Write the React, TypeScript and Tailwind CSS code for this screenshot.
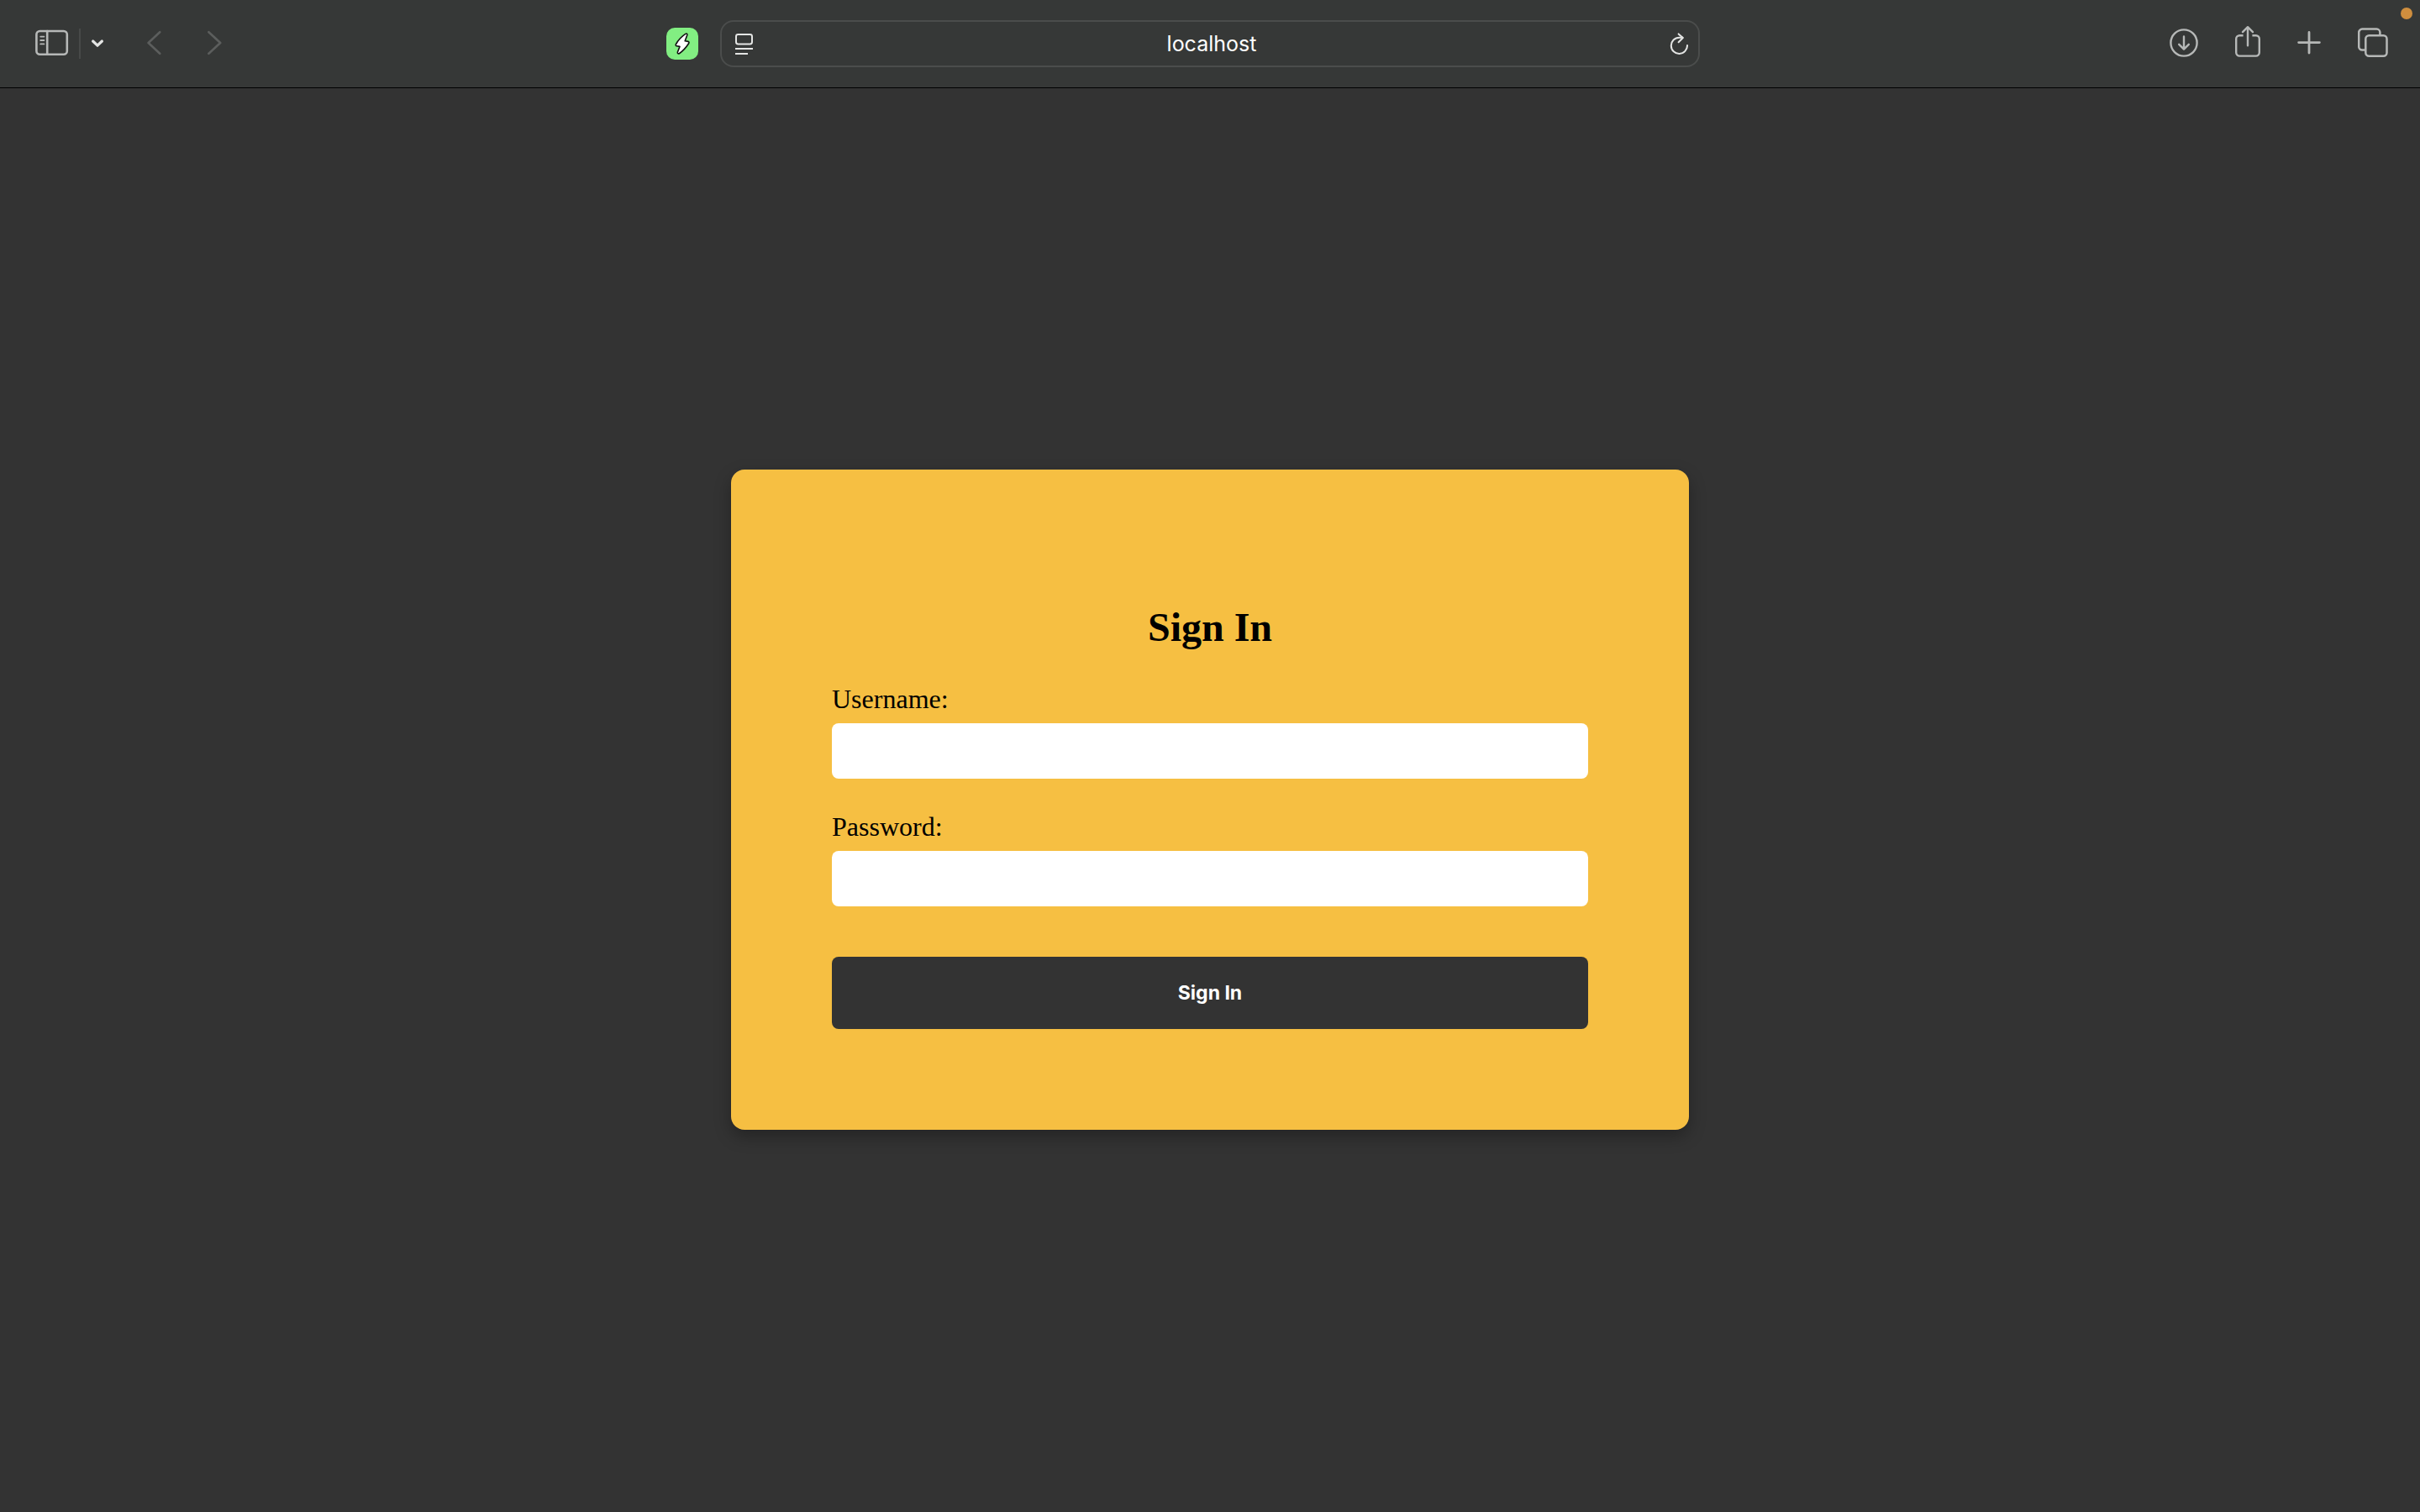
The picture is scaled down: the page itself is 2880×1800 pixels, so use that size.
import type { ReactNode } from "react";

function ToolButton({ label, className, children }: { label: string; className?: string; children: ReactNode }) {
  return (
    <button type="button" aria-label={label} className={`shrink-0 ${className ?? ""}`}>
      {children}
    </button>
  );
}

const strokeProps = {
  fill: "none",
  stroke: "currentColor",
  strokeLinecap: "round",
  strokeLinejoin: "round",
} as const;

function SidebarIcon() {
  return (
    <svg width="40" height="44" viewBox="0 0 40 44" {...strokeProps} strokeWidth="2.6">
      <rect x="1.4" y="7" width="36.4" height="27.8" rx="4" />
      <path d="M14.2 7v27.8" />
      <path d="M6.2 13.6h4.2M6.2 18h4.2M6.2 22.4h4.2" strokeWidth="1.8" />
    </svg>
  );
}

function MenuChevronIcon() {
  return (
    <svg width="16" height="44" viewBox="0 0 16 44" {...strokeProps} strokeWidth="3.2">
      <path d="M2.6 19l5.4 5.2 5.4-5.2" />
    </svg>
  );
}

function BackIcon() {
  return (
    <svg width="18" height="44" viewBox="0 0 18 44" {...strokeProps} strokeWidth="2.6">
      <path d="M16.2 8.2L2.6 21l13.6 12.8" />
    </svg>
  );
}

function ForwardIcon() {
  return (
    <svg width="18" height="44" viewBox="0 0 18 44" {...strokeProps} strokeWidth="2.6">
      <path d="M2.4 8.2L16.2 21 2.4 33.8" />
    </svg>
  );
}

function BoltIcon() {
  return (
    <svg width="38" height="38" viewBox="0 0 38 38">
      <path
        d="M22.8 7.4c1.3-.8 2.4-.1 2 1.4L22.2 15.8l3.6.6c1.2.3 1.5 1.2.8 2.3-3 4.6-6.4 8.6-11 11.8-1.5.9-2.7.1-2.2-1.5l2.6-6.6-3.7-.6c-1.1-.2-1.4-1.2-.8-2.3 2.6-4.7 6.4-8.9 11.3-12.1z"
        fill="#fff"
        stroke="#111"
        strokeWidth="1.6"
        strokeLinejoin="round"
      />
    </svg>
  );
}

function PageMenuIcon() {
  return (
    <svg width="22" height="44" viewBox="0 0 22 44" {...strokeProps} strokeWidth="2" strokeLinecap="butt">
      <rect x="1" y="11" width="19" height="11.5" rx="2.4" />
      <path d="M0 28h21M0 34h15" />
    </svg>
  );
}

function ReloadIcon() {
  return (
    <svg width="22" height="44" viewBox="0 0 22 44" {...strokeProps} strokeWidth="2">
      <path d="M21 24a9.6 9.6 0 1 1-9.6-9.3h4" />
      <path d="M10.6 10.4l5.2 4.6-5.2 5.2" />
    </svg>
  );
}

function DownloadIcon() {
  return (
    <svg width="34" height="44" viewBox="0 0 34 44" {...strokeProps} strokeWidth="2.4">
      <circle cx="17" cy="21" r="15.6" />
      <path d="M17 13.4v15M11.2 22.8L17 28.6l5.8-5.8" />
    </svg>
  );
}

function ShareIcon() {
  return (
    <svg width="30" height="44" viewBox="0 0 30 44" {...strokeProps} strokeWidth="2.4">
      <path
        d="M9.6 12.2H5.2a4 4 0 0 0-4 4v16.4a4 4 0 0 0 4 4h19.6a4 4 0 0 0 4-4V16.2a4 4 0 0 0-4-4h-4.4"
        strokeLinecap="butt"
      />
      <path d="M15 24.2V2.6M9 8.2l6-6 6 6" />
    </svg>
  );
}

function PlusIcon() {
  return (
    <svg width="28" height="44" viewBox="0 0 28 44" {...strokeProps} strokeWidth="2.8">
      <path d="M14 8.4v24.6M1.6 20.6h24.8" />
    </svg>
  );
}

function TabsIcon() {
  return (
    <svg width="36" height="44" viewBox="0 0 36 44" {...strokeProps} strokeWidth="2.5">
      <rect x="9.3" y="12.3" width="25.2" height="24.4" rx="4" />
      <path d="M9 29.5H5.2a4 4 0 0 1-4-4V8.6a4 4 0 0 1 4-4h17.2a4 4 0 0 1 4 4V12" strokeLinecap="butt" />
    </svg>
  );
}

function BrowserBar() {
  return (
    <header className="relative grid h-[105px] shrink-0 grid-cols-[1fr_40.5%_1fr] items-center border-b border-black bg-[#363837] text-[#b6b8b7]">
      <div className="flex items-center pl-[42px] pr-[26px]">
        <ToolButton label="Show sidebar">
          <SidebarIcon />
        </ToolButton>
        <span className="ml-3 h-9 w-0.5 bg-[#484a49]" />
        <ToolButton label="Tab groups" className="ml-3 text-[#e4e5e4]">
          <MenuChevronIcon />
        </ToolButton>
        <ToolButton label="Back" className="ml-[50px] text-[#5c5e5d]">
          <BackIcon />
        </ToolButton>
        <ToolButton label="Forward" className="ml-[54px] text-[#5c5e5d]">
          <ForwardIcon />
        </ToolButton>
        <ToolButton label="Extension" className="ml-auto rounded-[10px] bg-[#82ee82]">
          <BoltIcon />
        </ToolButton>
      </div>

      <div className="flex h-14 items-center rounded-2xl border-2 border-[#4b4d4c] pl-4 pr-3 text-[#e4e5e4]">
        <ToolButton label="Page menu">
          <PageMenuIcon />
        </ToolButton>
        <input
          aria-label="Address"
          defaultValue="localhost"
          className="min-w-0 flex-1 bg-transparent text-center font-['Inter',sans-serif] text-[25px] leading-8 text-white outline-none"
        />
        <ToolButton label="Reload">
          <ReloadIcon />
        </ToolButton>
      </div>

      <div className="flex items-center justify-end pr-[38px]">
        <ToolButton label="Downloads">
          <DownloadIcon />
        </ToolButton>
        <ToolButton label="Share" className="ml-11">
          <ShareIcon />
        </ToolButton>
        <ToolButton label="New tab" className="ml-11">
          <PlusIcon />
        </ToolButton>
        <ToolButton label="Tab overview" className="ml-11">
          <TabsIcon />
        </ToolButton>
      </div>

      <span className="absolute right-[9px] top-[9px] size-3.5 rounded-full bg-[#cf8e3e]" />
    </header>
  );
}

function Field({ id, label, type }: { id: string; label: string; type: string }) {
  return (
    <div className="mb-10">
      <label htmlFor={id} className="mb-3 block text-[32px] leading-[34px]">
        {label}
      </label>
      <input id={id} type={type} className="block h-[66px] w-full rounded-lg bg-white px-5 text-[26px]" />
    </div>
  );
}

export default function App() {
  return (
    <div className="flex min-h-screen flex-col bg-[#333333]">
      <BrowserBar />
      <main className="flex flex-1 items-center justify-center pb-px">
        <form className="w-full max-w-[1140px] rounded-2xl bg-[#f6bf42] p-[120px] font-['Liberation_Serif',serif] text-black shadow-[0_8px_20px_rgba(0,0,0,0.3)]">
          <h2 className="my-10 text-center text-[48px] font-bold leading-[56px]">Sign In</h2>
          <Field id="username" label="Username:" type="text" />
          <Field id="password" label="Password:" type="password" />
          <button
            type="button"
            className="mt-[60px] block h-[86px] w-full rounded-lg bg-[#333333] font-['Inter',sans-serif] text-[23px] font-bold text-white"
          >
            Sign In
          </button>
        </form>
      </main>
    </div>
  );
}
